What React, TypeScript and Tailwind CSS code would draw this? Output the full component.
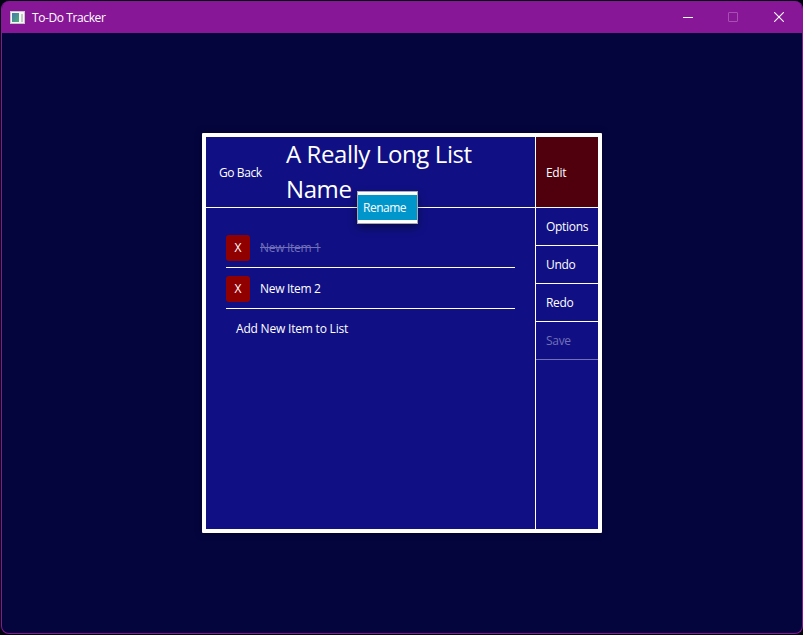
import type { ReactNode } from "react";

function DeleteButton() {
  return (
    <button className="flex h-[26px] w-6 items-center justify-center rounded-[3px] bg-[#910000] text-white">
      X
    </button>
  );
}

function Item({ children, done = false }: { children: ReactNode; done?: boolean }) {
  return (
    <div className="flex h-[41px] items-end border-b border-white pb-[6px]">
      <DeleteButton />
      <span
        className={
          done
            ? "ml-[10px] leading-[26px] tracking-[-0.3px] text-[#706fb8] line-through"
            : "ml-[10px] leading-[26px] tracking-[-0.3px] text-white"
        }
      >
        {children}
      </span>
    </div>
  );
}

function SideButton({ children, disabled = false }: { children: ReactNode; disabled?: boolean }) {
  return (
    <button
      disabled={disabled}
      className={
        disabled
          ? "h-[38px] border-b border-[#706fb8] pl-[10px] text-left tracking-[-0.3px] text-[#706fb8]"
          : "h-[38px] border-b border-white pl-[10px] text-left tracking-[-0.3px]"
      }
    >
      {children}
    </button>
  );
}

function TitleBar() {
  return (
    <header className="flex h-8 shrink-0 items-center bg-[#881798] text-white">
      <svg className="ml-2 shrink-0" width="15" height="13" viewBox="0 0 15 13" shapeRendering="crispEdges">
        <defs>
          <linearGradient id="pane" x1="0" y1="0" x2="1" y2="1">
            <stop offset="0" stopColor="#4478b0" />
            <stop offset="1" stopColor="#4fae76" />
          </linearGradient>
        </defs>
        <rect width="15" height="13" fill="#c9c4cc" />
        <rect x="1" y="1" width="13" height="11" fill="#f6f6f6" />
        <rect x="2" y="2" width="7" height="9" fill="url(#pane)" />
        <rect x="11" y="3" width="2" height="8" fill="#c4c8c6" />
      </svg>
      <span className="ml-[7px] grow pt-[2px] leading-4 tracking-[-0.4px]">To-Do Tracker</span>
      <div className="flex">
        <div className="flex h-8 w-[46px] items-center justify-center">
          <svg width="10" height="10" viewBox="0 0 10 10">
            <path d="M0 5.5H10" stroke="#fff" />
          </svg>
        </div>
        <div className="flex h-8 w-11 items-center justify-center">
          <svg width="10" height="10" viewBox="0 0 10 10">
            <rect x=".5" y=".5" width="9" height="9" rx=".5" fill="none" stroke="#a74fb3" />
          </svg>
        </div>
        <div className="flex h-8 w-[47px] items-center justify-end pr-[18px]">
          <svg width="10" height="10" viewBox="0 0 10 10">
            <path d="M.2 .2L9.8 9.8M9.8 .2L.2 9.8" stroke="#fff" strokeWidth="1.1" />
          </svg>
        </div>
      </div>
    </header>
  );
}

export default function App() {
  return (
    <div className="h-[635px] w-[803px] overflow-hidden bg-[#000510] pt-px pl-px font-['Open_Sans','Noto_Sans',sans-serif] text-[12px]">
      <div className="flex h-[633px] w-[802px] flex-col overflow-hidden rounded-[8px] border-x border-b border-[#881798] bg-[#05053e]">
        <TitleBar />
        <main className="flex grow items-start justify-center pt-[100px]">
          <section className="relative flex h-[400px] w-[400px] rounded-[1px] border-4 border-white bg-[#101084] text-white shadow-[0_0_6px_#020228]">
            <div className="flex w-[329px] flex-col">
              <div className="flex h-[71px] items-center border-b border-white">
                <button className="ml-[13px] w-[67px] pt-[2px] text-left tracking-[-0.4px]">Go Back</button>
                <h1 className="-mt-[2px] w-[210px] text-[24px] leading-[35px] tracking-[-0.4px]">
                  A Really Long List Name
                </h1>
              </div>
              <div className="flex flex-col px-5 pt-[19px]">
                <Item done>New Item 1</Item>
                <Item>New Item 2</Item>
                <button className="mt-[11px] pl-[10px] text-left leading-[18px] tracking-[-0.2px]">
                  Add New Item to List
                </button>
              </div>
            </div>
            <nav className="flex grow flex-col border-l border-white">
              <button className="h-[71px] border-b border-white bg-[#50000d] pt-[2px] pl-[10px] text-left tracking-[-0.3px]">
                Edit
              </button>
              <SideButton>Options</SideButton>
              <SideButton>Undo</SideButton>
              <SideButton>Redo</SideButton>
              <SideButton disabled>Save</SideButton>
            </nav>
            <div className="absolute top-[54px] left-[151px] h-[33px] w-[61px] border border-[#aaa] bg-white py-[3px] shadow-[0_4px_8px_rgba(0,0,0,0.4)]">
              <div className="h-[25px] bg-[#0096cc] pl-[5px] leading-[25px] tracking-[-0.5px]">Rename</div>
            </div>
          </section>
        </main>
      </div>
    </div>
  );
}
